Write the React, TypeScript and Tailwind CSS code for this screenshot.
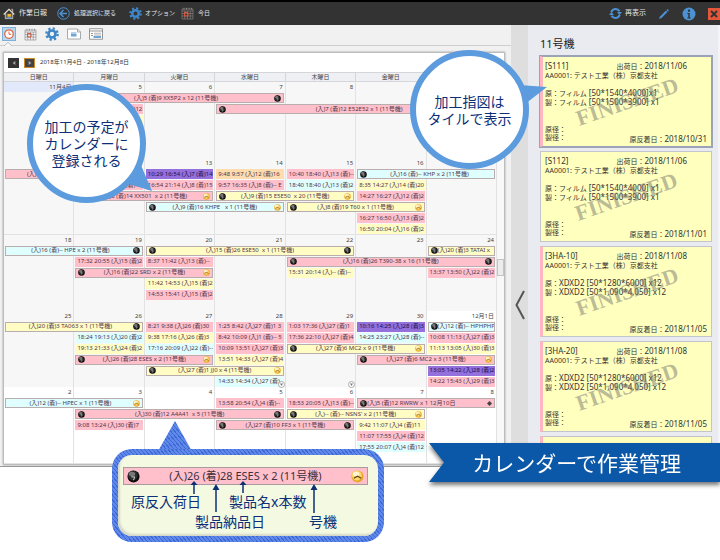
import { ReactNode } from "react";
import clsx from "clsx";

type Color = "pink" | "yellow" | "cyan" | "purple" | "orange";
type Orb = "dark" | "sun";

interface Bar {
  col: number;
  lane: number;
  color: Color;
  text: string;
  span?: number;
  start?: Orb;
  end?: Orb;
  left?: boolean;
  diamond?: boolean;
}

interface Week {
  days: string[];
  bars: Bar[];
}

interface Order {
  code: string;
  ship: string;
  item: string;
  source: string;
  product: string;
  arrival: string;
  flagged: boolean;
}

const weekdays = ["日曜日", "月曜日", "火曜日", "水曜日", "木曜日", "金曜日", ""];

const colors: Record<Color, string> = {
  pink: "bg-[#ffc0cb]",
  yellow: "bg-[#fffdc4]",
  cyan: "bg-[#dfffff]",
  purple: "bg-[#9370db]",
  orange: "bg-[#ffdcae]",
};

const weeks: Week[] = [
  {
    days: ["11月4日", "5", "6", "7", "8", "9", "10"],
    bars: [
      { col: 1, span: 3, lane: 1, color: "pink", text: "(入)5 (着)9 XX5P2 x 12 (11号機)", end: "dark" },
      { col: 3, span: 4, lane: 2, color: "pink", text: "(入)7 (着)12 E52E52 x 1 (11号機)", start: "dark" },
      { col: 1, lane: 2, color: "pink", text: "10:12 15:40 (入)5 (着)12" },
      { col: 1, lane: 3, color: "yellow", text: "" },
    ],
  },
  {
    days: ["11", "12", "13", "14", "15", "16", "17"],
    bars: [
      { col: 0, span: 2, lane: 1, color: "pink", text: "(入)7 (着)12 E52E52 x 1 (11号機)", end: "dark" },
      { col: 1, lane: 2, color: "pink", text: "13:10 16:20 (入)8 (着)14" },
      { col: 1, span: 2, lane: 3, color: "pink", text: "(入)8 (着)14 XX501  x 2 (11号機)", start: "dark", end: "sun" },
      { col: 2, lane: 1, color: "purple", text: "10:29 16:54 (入)7 (着)14" },
      { col: 2, lane: 2, color: "pink", text: "16:54 21:14 (入)8 (着)15" },
      { col: 2, span: 2, lane: 4, color: "cyan", text: "(入)9 (着)16 KHPE   x 1 (11号機)", start: "dark", end: "sun" },
      { col: 3, lane: 1, color: "orange", text: "9:48 9:57 (入)12 (着)16" },
      { col: 3, lane: 2, color: "pink", text: "9:57 16:35 (入)8 (着)-- E" },
      { col: 3, span: 2, lane: 3, color: "yellow", text: "(入)9 (着)15 E5E50  x 20 (11号機)", start: "dark", end: "sun" },
      { col: 4, lane: 1, color: "pink", text: "10:40 18:40 (入)13 (着)--" },
      { col: 4, lane: 2, color: "cyan", text: "18:40 18:40 (入)13 (着)2" },
      { col: 4, span: 2, lane: 4, color: "yellow", text: "(入)8 (着)19 T60 x 1 (11号機)", start: "dark", end: "sun" },
      { col: 5, span: 2, lane: 1, color: "cyan", text: "(入)16 (着)-- KHP x 2 (11号機)", start: "dark" },
      { col: 5, lane: 2, color: "yellow", text: "8:35 14:27 (入)14 (着)20" },
      { col: 5, lane: 3, color: "pink", text: "14:27 16:27 (入)12 (着)2" },
      { col: 5, lane: 5, color: "pink", text: "16:27 16:50 (入)13 (着)2" },
      { col: 5, lane: 6, color: "yellow", text: "16:50 20:04 (入)16 (着)2" },
    ],
  },
  {
    days: ["18", "19", "20", "21", "22", "23", "24"],
    bars: [
      { col: 0, span: 2, lane: 1, color: "cyan", text: "(入)16 (着)-- HPE x 2 (11号機)", end: "dark" },
      { col: 1, lane: 2, color: "pink", text: "17:32 20:55 (入)15 (着)2" },
      { col: 1, span: 2, lane: 3, color: "pink", text: "(入)16 (着)22 SRD x 2 (11号機)", start: "dark", end: "sun" },
      { col: 2, span: 3, lane: 1, color: "yellow", text: "(入)15 (着)26 ESE50  x 1 (11号機)", start: "dark", end: "dark" },
      { col: 2, lane: 2, color: "pink", text: "8:37 11:42 (入)13 (着)--" },
      { col: 2, lane: 4, color: "yellow", text: "11:42 14:53 (入)15 (着)2" },
      { col: 2, lane: 5, color: "pink", text: "14:53 15:41 (入)15 (着)2" },
      { col: 4, span: 3, lane: 2, color: "pink", text: "(入)16 (着)26 T390-38 x 16 (11号機)", start: "dark", end: "dark" },
      { col: 4, lane: 3, color: "yellow", text: "15:31 20:14 (入)-- (着)--" },
      { col: 6, lane: 1, color: "yellow", text: "(入)20 (着)3 TATAI x", start: "dark", left: true },
      { col: 6, lane: 3, color: "pink", text: "13:37 13:50 (入)22 (着)2" },
    ],
  },
  {
    days: ["25", "26", "27", "28", "29", "30", "12月1日"],
    bars: [
      { col: 0, span: 2, lane: 1, color: "yellow", text: "(入)20 (着)3 TA063 x 1 (11号機)", end: "dark" },
      { col: 1, lane: 2, color: "cyan", text: "18:24 19:13 (入)20 (着)2" },
      { col: 1, lane: 3, color: "yellow", text: "19:13 21:33 (入)24 (着)2" },
      { col: 1, span: 2, lane: 4, color: "pink", text: "(入)26 (着)28 ESES x 2 (11号機)", start: "dark", end: "sun" },
      { col: 2, lane: 1, color: "pink", text: "8:21 9:38 (入)26 (着)30" },
      { col: 2, lane: 2, color: "yellow", text: "9:38 17:16 (入)26 (着)3" },
      { col: 2, lane: 3, color: "cyan", text: "17:16 20:09 (入)22 (着)--" },
      { col: 2, span: 2, lane: 5, color: "yellow", text: "(入)27 (着)1 JJ0 x 4 (11号機)", start: "dark", end: "sun" },
      { col: 3, lane: 1, color: "pink", text: "1:25 8:42 (入)27 (着)1 3" },
      { col: 3, lane: 2, color: "pink", text: "8:42 10:09 (入)1 (着)-- 5" },
      { col: 3, lane: 3, color: "pink", text: "10:09 13:51 (入)27 (着)3" },
      { col: 3, lane: 4, color: "yellow", text: "13:51 14:33 (入)27 (着)4" },
      { col: 3, lane: 6, color: "cyan", text: "14:33 14:34 (入)27 (着)" },
      { col: 4, lane: 1, color: "pink", text: "1:03 17:36 (入)27 (着)1" },
      { col: 4, lane: 2, color: "pink", text: "17:36 22:10 (入)27 (着)4" },
      { col: 4, span: 2, lane: 3, color: "yellow", text: "(入)27 (着)6 MC2 x 9 (11号機)", start: "dark", end: "sun" },
      { col: 5, lane: 1, color: "purple", text: "10:16 14:25 (入)28 (着)3" },
      { col: 5, lane: 2, color: "cyan", text: "14:25 23:27 (入)28 (着)--" },
      { col: 5, span: 2, lane: 4, color: "pink", text: "(入)27 (着)6 MC2 x 3 (11号機)", start: "dark", end: "sun" },
      { col: 6, lane: 1, color: "cyan", text: "(入)12 (着)-- HPHPHP", start: "dark", left: true },
      { col: 6, lane: 2, color: "pink", text: "10:08 11:13 (入)27 (着)3" },
      { col: 6, lane: 3, color: "yellow", text: "11:13 13:05 (入)30 (着)3" },
      { col: 6, lane: 5, color: "purple", text: "13:05 14:22 (入)28 (着)2" },
      { col: 6, lane: 6, color: "pink", text: "14:22 15:43 (入)29 (着)3" },
    ],
  },
  {
    days: ["2", "3", "4", "5", "6", "7", "8"],
    bars: [
      { col: 0, span: 2, lane: 1, color: "cyan", text: "(入)12 (着)-- HPEC x 1 (11号機)", end: "sun" },
      { col: 1, span: 3, lane: 2, color: "pink", text: "(入)30 (着)12 A4A41  x 5 (11号機)", start: "dark", end: "dark" },
      { col: 1, lane: 3, color: "pink", text: "9:08 13:24 (入)30 (着)7" },
      { col: 3, lane: 1, color: "pink", text: "13:58 20:54 (入)4 (着)--" },
      { col: 3, span: 2, lane: 3, color: "pink", text: "(入)27 (着)10 FF3 x 1 (11号機)", start: "dark", end: "dark" },
      { col: 4, lane: 1, color: "pink", text: "18:53 20:05 (入)13 (着)--" },
      { col: 4, span: 2, lane: 2, color: "yellow", text: "(入)-- (着)-- NSNS' x 2 (11号機)", start: "dark", end: "sun" },
      { col: 5, span: 2, lane: 1, color: "pink", text: "(入)5 (着)12 RWRW x 1 12月10日", start: "dark", left: true, diamond: true },
      { col: 5, lane: 3, color: "yellow", text: "9:42 11:07 (入)4 (着)11" },
      { col: 5, lane: 4, color: "pink", text: "11:07 17:55 (入)4 (着)12" },
      { col: 5, lane: 5, color: "cyan", text: "17:55 20:07 (入)4 (着)12" },
    ],
  },
];

const orders: Order[] = [
  { code: "[S111]", ship: "2018/11/06", item: "フィルム", source: "[50*1540*4000]x1", product: "[50*1500*3900] x1", arrival: "2018/10/31", flagged: true },
  { code: "[S112]", ship: "2018/11/06", item: "フィルム", source: "[50*1540*4000] x1", product: "[50*1500*3900] x1", arrival: "2018/11/01", flagged: false },
  { code: "[3HA-10]", ship: "2018/11/08", item: "XDXD2", source: "[50*1280*6000] x12", product: "[50*1,090*4,050] x12", arrival: "2018/11/05", flagged: true },
  { code: "[3HA-20]", ship: "2018/11/08", item: "XDXD2", source: "[50*1280*6000] x12", product: "[50*1,090*4,050] x12", arrival: "2018/11/05", flagged: true },
];

function ClockOrb({ kind, className }: { kind: Orb; className: string }) {
  const sun = kind === "sun";
  return (
    <svg viewBox="0 0 14 14" className={clsx("shrink-0", className)} aria-hidden="true">
      <circle cx="7" cy="7" r="6.5" fill={sun ? "#e9a92c" : "#0c0c0c"} />
      <circle cx="6.3" cy="6" r="5.2" fill={sun ? "#ffd872" : "#2e2e2e"} />
      <ellipse cx="5.4" cy="4.2" rx="3.4" ry="2.4" fill={sun ? "#fff6d4" : "#777"} />
      {sun ? (
        <path d="M3 9 7 6.6 11 9" fill="none" stroke="#5b4310" strokeWidth="1.3" />
      ) : (
        <path d="M4.6 7.4h3.6L7 11" fill="none" stroke="#ddd" strokeWidth="1" />
      )}
    </svg>
  );
}

function GearIcon({ className }: { className: string }) {
  return (
    <svg viewBox="0 0 26 26" className={className} fill="none" stroke="#3f86c8" aria-hidden="true">
      <circle cx="13" cy="13" r="6.5" strokeWidth="5" />
      <circle cx="13" cy="13" r="10.5" strokeWidth="4.4" strokeDasharray="4.12 4.12" />
    </svg>
  );
}

function CalendarIcon({ className, line }: { className: string; line: string }) {
  return (
    <svg viewBox="0 0 26 26" className={className} fill="none" aria-hidden="true">
      <path d="M2 4h22v20H2zM2 8h22M2 13h22M2 18h22M7.500 8v16M13 8v16M18.500 8v16" stroke={line} strokeWidth="1.300" />
      <path d="M6 1.500v4M11 1.500v4M16 1.500v4M21 1.500v4" stroke={line} strokeWidth="1.800" />
      <path d="M7 11h7v7H7z" stroke="#e0553a" strokeWidth="2" />
    </svg>
  );
}

function TopBar() {
  return (
    <header className="flex h-[25px] shrink-0 items-center border-t-2 border-black bg-[#333] pl-[3px] text-[#e4e4e4]">
      <button className="flex h-4 w-[54px] items-center gap-1 text-[7px]">
        <svg viewBox="0 0 26 26" className="size-3" aria-hidden="true">
          <path d="M5 12v11h16V12" fill="#6b6558" stroke="#c9c2b4" strokeWidth="2" />
          <path d="M1.500 14 13 3l11.500 11" fill="none" stroke="#e8e2d6" strokeWidth="2.500" />
          <path d="M18 3h3v6" stroke="#c9c2b4" strokeWidth="2" fill="none" />
          <path d="M10 13h7v6h-7z" fill="#ffb52e" />
          <path d="M10 19h7v4h-7z" fill="#5d96d0" />
        </svg>
        作業日報
      </button>
      <button className="flex h-4 w-[72px] items-center gap-1 text-[6px]">
        <svg viewBox="0 0 26 26" className="size-[13px]" fill="none" stroke="#4b92d4" aria-hidden="true">
          <circle cx="13" cy="13" r="11.500" strokeWidth="2" />
          <path d="M20 13H7M13 6l-7 7 7 7" strokeWidth="3" />
        </svg>
        処理選択に戻る
      </button>
      <button className="flex h-4 w-[52px] items-center gap-[3px] text-[6px]">
        <GearIcon className="size-[13px]" />
        オプション
      </button>
      <button className="flex h-4 items-center gap-1 text-[6px]">
        <CalendarIcon className="size-[13px]" line="#8b8784" />
        今日
      </button>
      <div className="ml-auto flex items-center gap-[13px]">
        <button className="flex items-center gap-[3px] text-[7px]">
          <svg viewBox="0 0 26 26" className="size-[13px]" fill="none" stroke="#4b92d4" strokeWidth="4" aria-hidden="true">
            <path d="M4.500 10.500a9 9 0 0 1 16.500-2M21.500 15.500a9 9 0 0 1-16.500 2" />
            <path d="M16 10h10l-5 6zM0 16h10l-5-6z" fill="#4b92d4" stroke="none" />
          </svg>
          再表示
        </button>
        <button aria-label="編集">
          <svg viewBox="0 0 20 20" className="size-[10px]" aria-hidden="true">
            <path d="M0 20l2-5L14 3l3 3L5 18z" fill="#4b92d4" />
            <path d="M15 2l2-2 3 3-2 2z" fill="#4b92d4" />
          </svg>
        </button>
        <div className="flex items-center gap-3">
          <button aria-label="情報">
            <svg viewBox="0 0 28 28" className="size-[14px]" aria-hidden="true">
              <circle cx="14" cy="14" r="13" fill="#4b92d4" />
              <circle cx="14" cy="7.500" r="2.300" fill="#333" />
              <path d="M10.500 12h5v9h2v2h-7v-2h2v-7h-2z" fill="#333" />
            </svg>
          </button>
          <button className="bg-[#e4573a] p-0.5" aria-label="閉じる">
            <svg viewBox="0 0 16 16" className="size-2" fill="none" stroke="#333" strokeWidth="4" aria-hidden="true">
              <path d="M2 2l12 12M14 2 2 14" />
            </svg>
          </button>
        </div>
      </div>
    </header>
  );
}

function Toolbar() {
  return (
    <div className="relative flex h-[21px] shrink-0 items-center gap-2 border-b border-[#cfcfcf] bg-[#f1f1f1] pb-0.5 pl-0.5">
      <button className="border border-[#7fb0dc] bg-[#b9d6ef]" aria-label="時刻">
        <svg viewBox="0 0 24 24" className="size-3" fill="none" aria-hidden="true">
          <circle cx="12" cy="12" r="8.500" fill="#fff" stroke="#e0653f" strokeWidth="2.500" />
          <path d="M12 7v5.500h4.500" stroke="#e0653f" strokeWidth="2" />
        </svg>
      </button>
      <button aria-label="カレンダー">
        <CalendarIcon className="size-[13px]" line="#8c8c8c" />
      </button>
      <button aria-label="設定">
        <GearIcon className="size-[14px]" />
      </button>
      <button aria-label="カード">
        <svg viewBox="0 0 28 24" className="h-3 w-[14px]" aria-hidden="true">
          <path d="M1 2h20l6 6v14H1z" fill="#fff" stroke="#8c9196" strokeWidth="1.500" />
          <path d="M21 2v6h6" fill="none" stroke="#8c9196" strokeWidth="1.500" />
          <path d="M8 9h11v2H8zM8 12h11v5H8z" fill="#6fa6d8" />
        </svg>
      </button>
      <button aria-label="一覧">
        <svg viewBox="0 0 28 24" className="h-3 w-[14px]" aria-hidden="true">
          <path d="M1 1.500h26v21H1z" fill="#fff" stroke="#777" strokeWidth="1.500" />
          <path d="M1 6h26M4 11h4M4 15h4" stroke="#777" strokeWidth="1.500" />
          <path d="M10 10.500h14M10 14h14" stroke="#999" strokeWidth="1.500" />
          <path d="M9 16h15v4H9z" fill="#6fa6d8" />
        </svg>
      </button>
      <svg viewBox="0 0 8 4" className="absolute -bottom-px left-1 h-1 w-2" aria-hidden="true">
        <path d="M0 4 4 .5 8 4" fill="#fafafa" stroke="#bbb" />
      </svg>
    </div>
  );
}

function CalendarBar({ bar }: { bar: Bar }) {
  const span = bar.span ?? 1;
  const framed = span > 1 || bar.start;
  return (
    <div
      className={clsx(
        "mr-0.5 mb-px ml-px flex min-w-0 items-center overflow-hidden whitespace-pre px-[2px]",
        colors[bar.color],
        framed && "border border-[#b9adad]",
        bar.color === "purple" ? "text-[#1f0f4a]" : "text-[#50354a]"
      )}
      style={{ gridColumn: `${bar.col + 1} / span ${span}`, gridRow: bar.lane + 1 }}
    >
      {bar.start && <ClockOrb kind={bar.start} className="size-[7px]" />}
      <span className={clsx(framed && "flex-1", !bar.left && framed && "text-center")}>{bar.text}</span>
      {bar.end && <ClockOrb kind={bar.end} className="size-[7px]" />}
      {bar.diamond && (
        <svg viewBox="0 0 10 10" className="size-[5px] shrink-0" aria-hidden="true">
          <path d="M5 0l5 5-5 5-5-5z" fill="#444" />
        </svg>
      )}
    </div>
  );
}

function CalendarWeek({ week, index }: { week: Week; index: number }) {
  return (
    <div className="grid min-h-0 flex-1 grid-cols-7 grid-rows-[repeat(7,11px)] leading-[9px]">
      {week.days.map((day, i) => (
        <div
          key={day}
          className={clsx(
            "border-r border-b border-[#e2e2e2]",
            index === 4 || day === "12月1日" ? "bg-white" : "bg-[#f7f7f7]"
          )}
          style={{ gridColumn: i + 1, gridRow: "1 / -1" }}
        >
          <time className={clsx("block pr-[2px] text-right leading-[10px] text-[#444]", day === "11月4日" && "bg-[#e2e9fb]")}>
            {day}
          </time>
        </div>
      ))}
      {week.bars.map((bar) => (
        <CalendarBar key={`${bar.col}-${bar.lane}`} bar={bar} />
      ))}
      {/* overflow markers for days with hidden entries */}
      {index === 3 &&
        [4, 5].map((col) => (
          <button
            key={col}
            className="z-10 mr-px size-[7px] self-end justify-self-end rounded-full border border-[#aaa] bg-white"
            style={{ gridColumn: col, gridRow: 7 }}
            aria-label="さらに表示"
          >
            <svg viewBox="0 0 10 10" aria-hidden="true">
              <path d="M2 3h6L5 8z" fill="#777" />
            </svg>
          </button>
        ))}
    </div>
  );
}

function Calendar() {
  return (
    <section className="flex min-h-0 flex-1 flex-col border border-[#bdbdbd] bg-white text-[6px] shadow-[0_0_2px_#999]">
      <div className="flex h-[19px] shrink-0 items-center gap-[5px] pl-1">
        <button className="flex h-[10px] w-[11px] items-center justify-center bg-[#333]" aria-label="前へ">
          <svg viewBox="0 0 6 6" className="size-1" aria-hidden="true">
            <path d="M5 0v6L1 3z" fill="#aaa" />
          </svg>
        </button>
        <button className="flex h-[10px] w-[11px] items-center justify-center border border-[#c98a2c] bg-[#444]" aria-label="次へ">
          <svg viewBox="0 0 6 6" className="size-1" aria-hidden="true">
            <path d="M1 0v6l4-3z" fill="#aaa" />
          </svg>
        </button>
        <span className="text-[#333]">2018年11月4日 - 2018年12月8日</span>
      </div>
      <div className="flex min-h-0 flex-1">
        <div className="flex min-w-0 flex-1 flex-col">
          <div className="grid h-[10px] shrink-0 grid-cols-7 border-y border-[#d4d6da] bg-[#eef0f4] text-center leading-[8px] text-[#444]">
            {weekdays.map((name, i) => (
              <span key={i} className="border-r border-[#d4d6da]">{name}</span>
            ))}
          </div>
          {weeks.map((week, i) => (
            <CalendarWeek key={i} week={week} index={i} />
          ))}
        </div>
        <div className="flex w-[7px] flex-col justify-center bg-[#f8f8f8]">
          <div className="h-[17px] border border-[#c4c4c4] bg-[#ececec]" />
        </div>
      </div>
    </section>
  );
}

function Small({ children }: { children: ReactNode }) {
  return <span className="text-[7px] leading-none">{children}</span>;
}

function OrderTile({ order, selected }: { order: Order; selected: boolean }) {
  const item = order.item === "XDXD2" ? order.item : <Small>{order.item}</Small>;
  return (
    <article
      className={clsx(
        "relative shrink-0 overflow-hidden border bg-[#ffffbe] pt-1 pr-1 pb-[3px] text-[8px] leading-[9px] whitespace-nowrap text-[#333]",
        selected ? "border-[#9aa3b8] outline outline-[#9aa3b8]" : "border-[#c3c5cc]",
        order.flagged ? "border-l-[3px] border-l-[#ffb6c1] pl-0.5" : "pl-1"
      )}
    >
      <div className="flex h-[10px] justify-between pr-5 leading-[10px]">
        <span>{order.code}</span>
        <span><Small>出荷日：</Small>{order.ship}</span>
      </div>
      <p className="text-[7px] leading-[10px]">AA0001: テスト工業（株）京都支社</p>
      <p className="mt-[7px] h-[9px]"><Small>原：</Small>{item} {order.source}</p>
      <p className="h-[9px]"><Small>製：</Small>{item} {order.product}</p>
      <p className="mt-[19px] text-[7px]">原径：</p>
      <div className="flex h-[9px] justify-between">
        <Small>製径：</Small>
        <span><Small>原反着日：</Small>{order.arrival}</span>
      </div>
      <span className="absolute inset-0 flex items-center justify-center">
        <span className="-rotate-[19deg] font-['Liberation_Serif',serif] text-[22px] font-bold text-[#77776e]/50">FINISHED</span>
      </span>
    </article>
  );
}

function OrderPanel() {
  return (
    <aside className="flex w-[192px] shrink-0 flex-col overflow-hidden border-r-2 border-[#f4f4f6] bg-[#e9ebf0] pt-3 pr-[6px] pl-3">
      <h2 className="text-[11px] leading-[14px] text-[#222]">11号機</h2>
      <div className="mt-[5px] flex min-h-0 flex-1 flex-col gap-1">
        {orders.map((order, i) => (
          <OrderTile key={order.code} order={order} selected={i === 0} />
        ))}
        <div className="flex-1 border border-l-[3px] border-[#c3c5cc] border-l-[#ffb6c1] bg-[#ffffbe]" />
      </div>
    </aside>
  );
}

function Callout({ children, tail, className }: { children: ReactNode; tail: ReactNode; className: string }) {
  return (
    <div className={clsx("absolute size-[119px]", className)}>
      {tail}
      <div className="relative flex size-full items-center justify-center rounded-full border-[6px] border-[#5c9bdd] bg-white text-center text-sm leading-[17px] text-[#0c2f78]">
        <p>{children}</p>
      </div>
    </div>
  );
}

function LegendBubble() {
  return (
    <div className="absolute top-[449px] left-[112px] w-[272px]">
      <div className="absolute -top-7 left-[45px] h-8 w-9 bg-[repeating-linear-gradient(50deg,#3c69d6_0_1px,#6088e8_1px_3px)] [clip-path:polygon(50%_0,100%_100%,0_100%)]" />
      <div className="relative rounded-[20px] bg-[repeating-linear-gradient(50deg,#3c69d6_0_1px,#6088e8_1px_3px)] p-[6px]">
        <div className="relative rounded-[14px] bg-[#f4fae2] pt-3 pr-[10px] pb-[5px] pl-[5px] text-sm leading-[18px] text-[#0c2f78] shadow-[inset_2px_-2px_2px_#d5d9c8]">
          <div className="flex h-[18px] items-center justify-between border border-[#a99aa0] bg-[#ffc0cb] px-[3px] text-[11px] text-[#3d3040]">
            <ClockOrb kind="dark" className="size-[13px]" />
            <span>(入)26 (着)28 ESES x 2 (11号機)</span>
            <ClockOrb kind="sun" className="size-[13px]" />
          </div>
          <div className="mt-2 flex gap-7 pl-2">
            <span>原反入荷日</span>
            <span>製品名x本数</span>
          </div>
          <div className="mt-[2px] flex gap-11 pl-[72px]">
            <span>製品納品日</span>
            <span>号機</span>
          </div>
          <svg viewBox="0 0 260 80" className="absolute top-0 left-0 h-20 w-[260px]" fill="none" stroke="#0c2f78" strokeWidth="1.500" aria-hidden="true">
            <path d="M76 39V28M98 57V32M125 38V28M196 58V32" />
            <path d="M76 26l3.500 4h-7zM98 29l3.500 6h-7zM125 26l3.500 4h-7zM196 29l3.500 6h-7z" fill="#0c2f78" stroke="none" />
          </svg>
        </div>
      </div>
    </div>
  );
}

export default function App() {
  return (
    <div className="relative h-screen overflow-hidden bg-white font-['Noto_Sans','Noto_Sans_CJK_JP',sans-serif]">
      <div className="flex h-5/6 flex-col border-b border-[#999] bg-[#f1f1f1]">
        <TopBar />
        <main className="flex min-h-0 flex-1">
          <div className="flex min-w-0 flex-1 flex-col">
            <Toolbar />
            <div className="flex min-h-0 flex-1 flex-col pt-[6px] pr-[6px] pb-px pl-[3px]">
              <Calendar />
            </div>
          </div>
          <button className="flex w-[17px] shrink-0 items-center justify-center bg-[#dedede] pt-[120px]" aria-label="パネルを開く">
            <svg viewBox="0 0 10 30" className="h-[30px] w-[10px]" fill="none" stroke="#555" strokeWidth="2" aria-hidden="true">
              <path d="M9 1 1.500 15 9 29" />
            </svg>
          </button>
          <OrderPanel />
        </main>
      </div>

      <Callout
        className="top-[84px] left-[27px]"
        tail={
          <svg viewBox="0 0 40 40" className="absolute -right-2 bottom-2 size-10" aria-hidden="true">
            <path d="M26 8 38 36 8 27z" fill="#5c9bdd" />
          </svg>
        }
      >
        加工の予定が<br />カレンダーに<br />登録される
      </Callout>
      <Callout
        className="top-[50px] right-[191px]"
        tail={
          <svg viewBox="0 0 40 30" className="absolute top-[30px] -right-5 h-[30px] w-10" aria-hidden="true">
            <path d="M10 5 38 7 16 24z" fill="#5c9bdd" />
          </svg>
        }
      >
        加工指図は<br />タイルで表示
      </Callout>

      <LegendBubble />

      <div className="absolute top-[443px] right-0 w-[291px] drop-shadow-[0_3px_2px_#0008]">
        <p className="bg-[#0b57a8] pt-1 pr-[39px] pb-[3px] text-right text-[21px] leading-8 text-white [clip-path:polygon(0_0,100%_0,100%_100%,0_100%,15px_50%)]">
          カレンダーで作業管理
        </p>
      </div>
    </div>
  );
}
